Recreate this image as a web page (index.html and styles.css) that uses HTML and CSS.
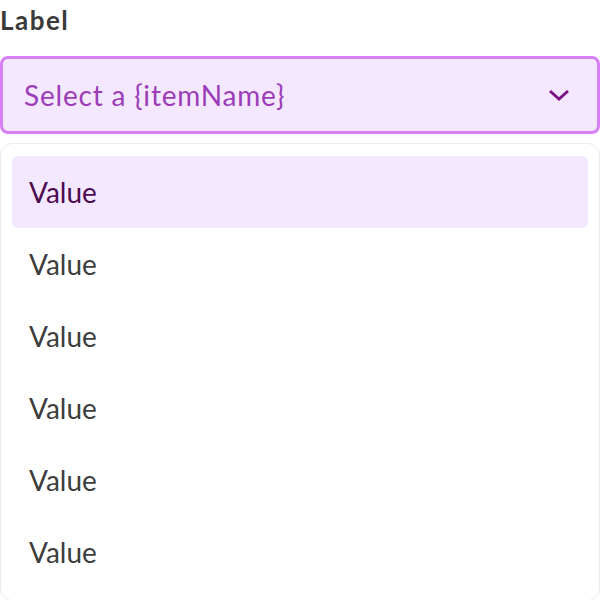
FILE: index.html
```html
<!DOCTYPE html>
<html>
<head>
    <title>Select</title>
    <link rel="stylesheet" href="styles.css">
</head>
<body>
    <div class="field">
        <div class="field-label">Label</div>
        <div class="select">
            <span class="select-text">Select a {itemName}</span>
            <svg class="select-chevron" width="24" height="24" viewBox="0 0 24 24">
                <path d="M3 8 L12 16 L21 8" fill="none" stroke="#7a1283" stroke-width="3" />
            </svg>
        </div>
        <!-- 下拉选项 -->
        <div class="menu">
            <div class="menu-item active">Value</div>
            <div class="menu-item">Value</div>
            <div class="menu-item">Value</div>
            <div class="menu-item">Value</div>
            <div class="menu-item">Value</div>
            <div class="menu-item">Value</div>
        </div>
    </div>
</body>
</html>
```

FILE: styles.css
```css
body {
    font-family: Lato, "Open Sans", sans-serif;
    margin: 0;
    padding: 0;
    background: #fff;
    color: #3d3d3d;
}
.field {
    width: 600px;
}
.field-label {
    font-size: 26px;
    font-weight: bold;
    letter-spacing: 1.5px;
    line-height: 40px;
    margin-bottom: 16px;
    color: #3a3a3a;
}
.select {
    height: 72px;
    border: 3px solid #d77ff7;
    border-radius: 8px;
    background: #f3e8ff;
    display: flex;
    align-items: center;
    justify-content: space-between;
    padding: 0 26px 0 21px;
}
.select-text {
    font-size: 28px;
    letter-spacing: 0.8px;
    color: #9c3cb8;
}
.select-chevron {
    display: block;
}
.menu {
    margin-top: 9px;
    border: 1px solid #ececec;
    border-radius: 12px;
    padding: 12px 11px;
}
.menu-item {
    height: 72px;
    display: flex;
    align-items: center;
    padding-left: 17px;
    font-size: 28px;
    border-radius: 6px;
    color: #3d3d3d;
}
.menu-item.active {
    background: #f3e8ff;
    color: #4d0a4f;
}
```
